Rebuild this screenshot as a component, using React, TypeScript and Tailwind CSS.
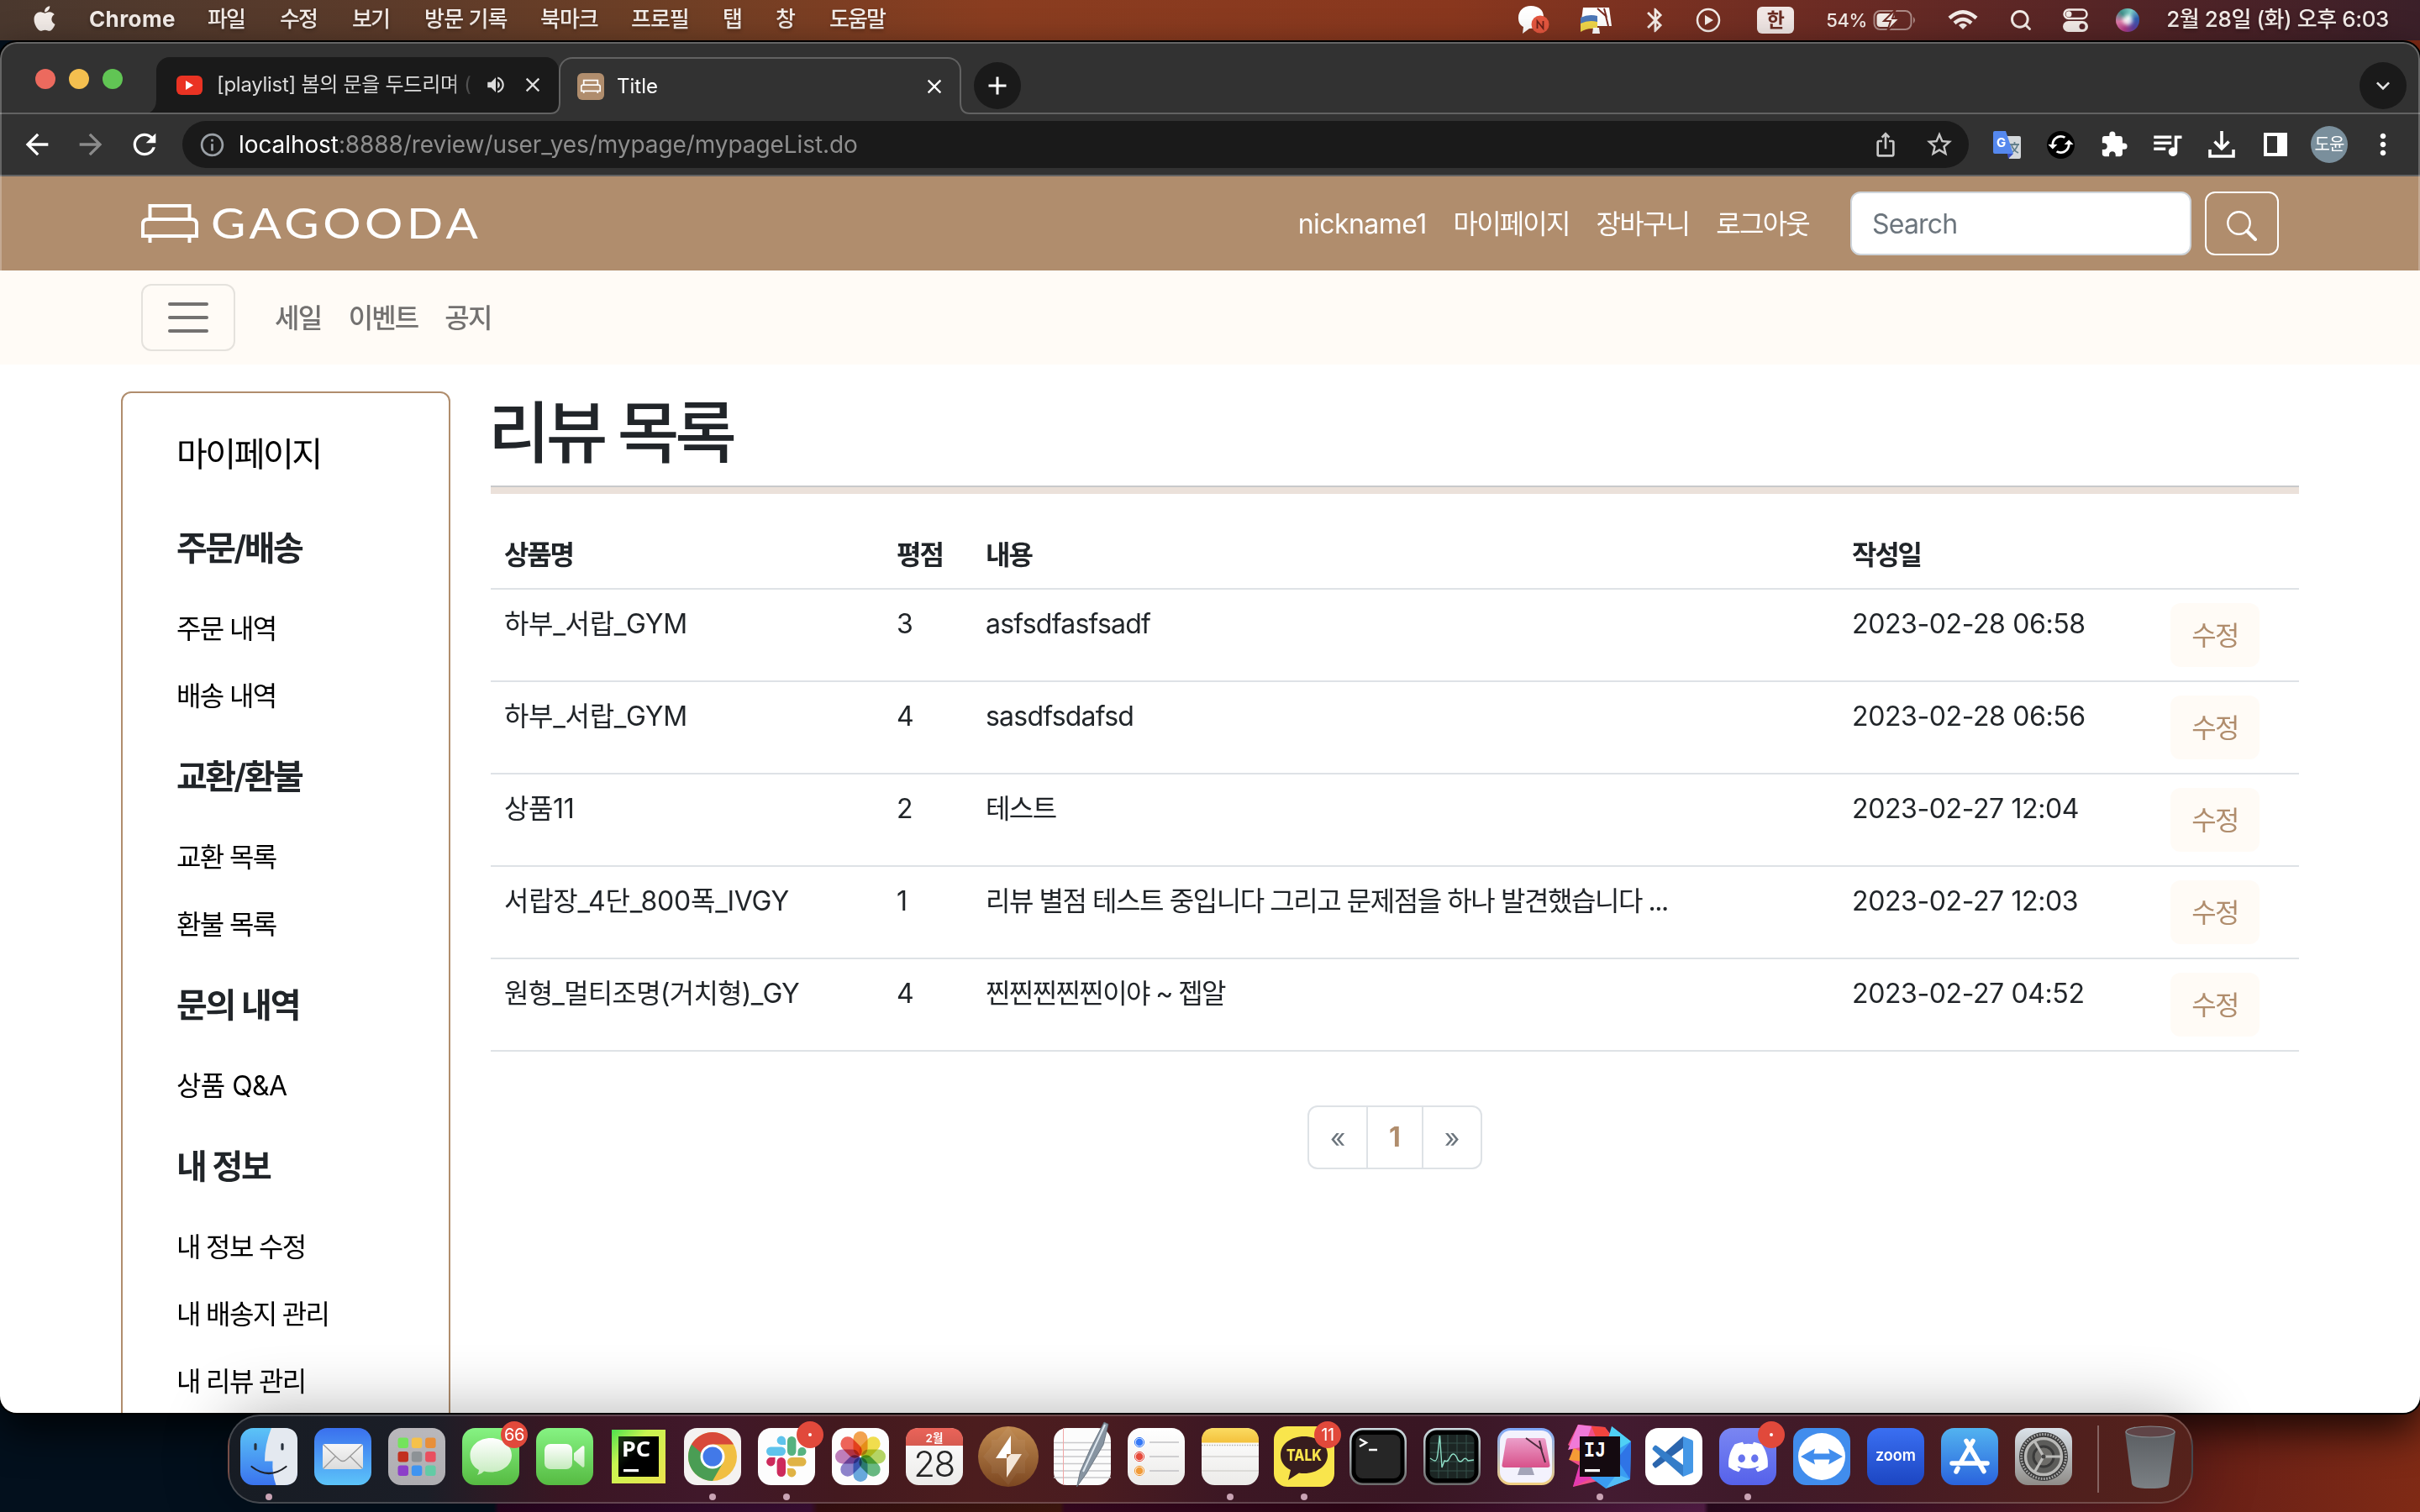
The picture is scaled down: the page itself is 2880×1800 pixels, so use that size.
import React from 'react';
import { FaApple, FaDiscord } from 'react-icons/fa';
import {
  MdArrowBack, MdArrowForward, MdRefresh, MdInfoOutline, MdIosShare, MdStarOutline, MdExtension,
  MdQueueMusic, MdMoreVert, MdVolumeUp, MdClose, MdAdd, MdExpandMore, MdBluetooth, MdSync,
} from 'react-icons/md';
import { FiSearch } from 'react-icons/fi';

/* ---------- macOS menu bar ---------- */

const menus: [string, string][] = [
  ['파일', 'w-[86px] tracking-[-0.074em]'],
  ['수정', 'w-[86px] tracking-[-0.074em]'],
  ['보기', 'w-[86px] tracking-[-0.074em]'],
  ['방문 기록', 'w-[138px] tracking-[-0.03em]'],
  ['북마크', 'w-[108px] tracking-[-0.04em]'],
  ['프로필', 'w-[109px] tracking-[-0.04em]'],
  ['탭', 'w-[63px]'],
  ['창', 'w-[64px]'],
  ['도움말', 'w-[80px] tracking-[-0.074em]'],
];

function MenuBar() {
  return (
    <div className="flex h-[48px] shrink-0 items-center justify-between bg-[linear-gradient(90deg,#4a382e_0%,#5c3b2a_16%,#6f3f25_28%,#8a3d20_41%,#89371e_60%,#6b2b24_76%,#4b2227_92%,#3b2029_100%)] pr-[37px] pl-[38px] text-[26px] font-medium text-[#f3ece8]">
      <div className="flex items-center [text-shadow:0_2px_4px_rgba(0,0,0,.35)]">
        <FaApple className="mr-[38px] -mt-[4px] h-[34px] w-[30px]" />
        <div className="flex pb-[3px]">
          <span className="w-[141px] font-bold tracking-[0.015em]">Chrome</span>
          {menus.map(([t, c]) => (
            <span key={t} className={c}>{t}</span>
          ))}
        </div>
      </div>
      <div className="flex items-center">
        <svg className="mr-[35px] h-[36px] w-[38px]" viewBox="0 0 38 36">
          <path d="M16 1C7 1 1 7 1 15c0 6 2 9 6 11l-1 8 8-6c10 0 17-5 17-14C31 6 25 1 16 1z" fill="#fff" />
          <circle cx="27" cy="23" r="10.5" fill="#e5573f" />
          <path d="M23.500 28v-9l7 9v-9" stroke="#6e2117" strokeWidth="1.800" fill="none" />
        </svg>
        <svg className="mr-[34px] h-[34px] w-[40px]" viewBox="0 0 40 34">
          <path d="M5 2h31l3 22H2z" fill="#fff" />
          <path d="M22 3l10 9 3 12M30 3l3 11" stroke="#7b2c22" strokeWidth="2" fill="none" />
          <path d="M2 14q10-5 20-2v10q-10-3-20 2z" fill="#4d78b8" />
          <path d="M2 21q10-5 20-2v9q-10-3-20 3z" fill="#f0d64a" />
          <path d="M17 26h7l1 7h-9z" fill="#fff" />
        </svg>
        <MdBluetooth className="mr-[31px] size-[34px]" />
        <svg className="mr-[43px] size-[30px]" viewBox="0 0 30 30">
          <circle cx="15" cy="15" r="13" fill="none" stroke="currentColor" strokeWidth="2.500" />
          <path d="M11 9l10 6-10 6z" fill="currentColor" />
        </svg>
        <span className="mr-[38px] flex h-[32px] w-[44px] items-center justify-center rounded-[6px] bg-[#f1e7e5] text-[23px] font-bold text-[#6a2c22]">한</span>
        <span className="mr-[8px] w-[48px] text-[22px] tracking-[-0.02em]">54%</span>
        <svg className="mr-[37px] h-[26px] w-[52px]" viewBox="0 0 52 26">
          <rect x="1.500" y="2" width="44" height="22" rx="7" fill="none" stroke="currentColor" strokeOpacity=".5" strokeWidth="2" />
          <path d="M48 9q4 4 0 8z" fill="currentColor" fillOpacity=".5" />
          <rect x="4.500" y="5" width="21" height="16" rx="4" fill="currentColor" />
          <path d="M27 0L13 14h8l-4 12 15-15h-9z" fill="currentColor" stroke="#6b2b24" strokeWidth="2" />
        </svg>
        <svg className="mr-[37px] h-[26px] w-[36px]" viewBox="0 0 36 26" fill="none" stroke="currentColor" strokeWidth="4.500">
          <path d="M2 10.500Q18-4 34 10.500M8 16.500Q18 7.500 28 16.500" />
          <path d="M18 24l-5-5q5-4.500 10 0z" fill="currentColor" stroke="none" />
        </svg>
        <FiSearch className="mr-[36px] size-[28px]" strokeWidth={2.5} />
        <svg className="mr-[33px] h-[28px] w-[30px]" viewBox="0 0 30 28">
          <rect x="1.500" y="1.500" width="27" height="10.500" rx="5.250" fill="none" stroke="currentColor" strokeWidth="2.500" />
          <circle cx="7" cy="6.700" r="3.500" fill="currentColor" />
          <rect x="0" y="15" width="30" height="13" rx="6.500" fill="currentColor" />
          <circle cx="23" cy="21.500" r="3.500" fill="#572529" />
        </svg>
        <span className="mr-[32px] size-[28px] rounded-full bg-[conic-gradient(from_200deg,#b23a86,#e07aa8,#3f8f8a,#7fd0c8,#2d5fb0,#5b3fa0,#b23a86)] p-[8px]">
          <span className="block size-[12px] rounded-full bg-white/90 blur-[2px]" />
        </span>
        <span className="pb-[3px] tracking-[-0.016em] [text-shadow:0_2px_4px_rgba(0,0,0,.35)]">2월 28일 (화) 오후 6:03</span>
      </div>
    </div>
  );
}

/* ---------- Browser chrome ---------- */

function SofaIcon({ className, stroke = 4 }: { className: string; stroke?: number }) {
  return (
    <svg className={className} viewBox="0 0 68 46" fill="none" stroke="currentColor" strokeWidth={stroke}>
      <path d="M10.500 17V2h47v15" />
      <path d="M2 38V24q0-6 6-6h52q6 0 6 6v14z" />
      <path d="M10.500 38v8M57.500 38v8" />
    </svg>
  );
}

function TabStrip() {
  return (
    <div className="flex h-[86px] shrink-0 items-end border-b-2 border-[#626262] pr-[16px]">
      <div className="mb-[28px] ml-[42px] flex gap-[16px]">
        <span className="size-[24px] rounded-full bg-[#ec6a5e]" />
        <span className="size-[24px] rounded-full bg-[#f4bf4f]" />
        <span className="size-[24px] rounded-full bg-[#61c554]" />
      </div>
      <div className="relative ml-[40px] flex h-[66px] w-[479px] items-center rounded-t-[16px] bg-[#1a1a1a] pl-[24px] text-[#dcdcdc]">
        <svg className="absolute bottom-0 -left-[8px] h-[16px] w-[8px]" viewBox="0 0 8 16"><path d="M8 0v16H0Q8 12 8 0z" fill="#1a1a1a" /></svg>
        <span className="flex h-[23px] w-[31px] items-center justify-center rounded-[6px] bg-[#ea3323]">
          <svg className="h-[11px] w-[9px]" viewBox="0 0 9 11"><path d="M0 0l9 5.500L0 11z" fill="#fff" /></svg>
        </span>
        <span className="ml-[17px] w-[307px] text-[24px] whitespace-nowrap tracking-[-0.012em] [mask-image:linear-gradient(90deg,#000_90%,transparent)]">
          [playlist] 봄의 문을 두드리며 (
        </span>
        <MdVolumeUp className="ml-[12px] size-[26px]" />
        <MdClose className="ml-[17px] size-[28px]" />
      </div>
      <div className="relative -mb-[2px] flex h-[68px] w-[479px] items-center rounded-t-[16px] border-2 border-b-0 border-[#626262] bg-[#323232] pl-[20px] text-white">
        <svg className="absolute bottom-0 -left-[12px] h-[14px] w-[12px]" viewBox="0 0 12 14"><path d="M12 0v14H0v-1q11 0 11-13z" fill="#323232" /><path d="M0 13q11 0 11-13" fill="none" stroke="#626262" strokeWidth="2" /></svg>
        <svg className="absolute -right-[12px] bottom-0 h-[14px] w-[12px]" viewBox="0 0 12 14"><path d="M0 0v14h12v-1Q1 13 1 0z" fill="#323232" /><path d="M12 13Q1 13 1 0" fill="none" stroke="#626262" strokeWidth="2" /></svg>
        <span className="flex size-[32px] items-center justify-center rounded-[6px] bg-[#b08d6d]">
          <SofaIcon className="h-[18px] w-[24px]" stroke={5} />
        </span>
        <span className="ml-[15px] text-[24px]">Title</span>
        <MdClose className="mr-[16px] ml-auto size-[28px]" />
      </div>
      <span className="mb-[4px] ml-[15px] flex size-[56px] items-center justify-center rounded-full bg-[#1a1a1a] text-white">
        <MdAdd className="size-[36px]" />
      </span>
      <span className="mb-[4px] ml-auto flex size-[56px] items-center justify-center rounded-full bg-[#1a1a1a] text-[#e3e3e3]">
        <MdExpandMore className="size-[32px]" />
      </span>
    </div>
  );
}

function Toolbar() {
  return (
    <div className="flex h-[74px] shrink-0 items-center border-b-2 border-[#626262] text-white">
      <MdArrowBack className="ml-[24px] size-[40px]" />
      <MdArrowForward className="ml-[24px] size-[40px] text-[#8b8b8b]" />
      <MdRefresh className="ml-[24px] size-[40px]" />
      <div className="ml-[25px] flex h-[56px] w-[2126px] items-center rounded-full bg-[#1a1a1a] pr-[17px] pl-[19px]">
        <MdInfoOutline className="size-[33px] text-[#9aa0a6]" />
        <span className="ml-[15px] text-[28px] tracking-[-0.003em] text-[#8e8e8e]">
          <span className="text-white">localhost</span>:8888/review/user_yes/mypage/mypageList.do
        </span>
        <MdIosShare className="ml-auto size-[32px] text-[#c7c7c7]" />
        <MdStarOutline className="ml-[30px] size-[36px] text-[#c7c7c7]" />
      </div>
      <svg className="ml-[29px] size-[33px]" viewBox="0 0 33 33">
        <path d="M12 6h19q2 0 2 2v22q0 3-2 3H19z" fill="#d5d9dc" />
        <path d="M20 16h11M25.500 13v3M29 17q-2 6-8 9M22 17q2 6 8 9" stroke="#64808c" strokeWidth="1.800" fill="none" />
        <path d="M2 0h13l9 27H2q-2 0-2-2V2q0-2 2-2z" fill="#5588ee" />
        <path d="M17 27h7l-6 6z" fill="#3a4fc0" />
        <text x="4" y="19" fill="#fff" fontSize="15" fontWeight="700" fontFamily="Inter">G</text>
      </svg>
      <span className="ml-[31px] flex size-[33px] items-center justify-center rounded-full bg-black">
        <MdSync className="size-[34px] rotate-90" />
      </span>
      <MdExtension className="ml-[30px] size-[34px]" />
      <MdQueueMusic className="ml-[25px] size-[42px]" />
      <svg className="ml-[28px] h-[32px] w-[32px]" viewBox="0 0 32 32" fill="none" stroke="currentColor" strokeWidth="3.600">
        <path d="M16 0v20M7.500 12.500L16 21l8.500-8.500M2 22v8h28v-8" />
      </svg>
      <svg className="ml-[34px] size-[28px]" viewBox="0 0 28 28">
        <path fillRule="evenodd" d="M0 0h28v28H0zM4 4v20h12V4z" fill="currentColor" />
      </svg>
      <span className="ml-[28px] flex size-[44px] items-center justify-center rounded-full bg-[#7a8f9c] text-[20px] tracking-[-0.05em]">도윤</span>
      <MdMoreVert className="ml-[22px] size-[40px]" />
    </div>
  );
}

/* ---------- Site ---------- */

function SiteHeader() {
  return (
    <>
      <header className="flex h-[112px] shrink-0 items-center bg-[#b08d6d] px-[168px] text-[32px] text-white">
        <SofaIcon className="h-[46px] w-[68px]" />
        <span className="ml-[15px] origin-left scale-x-[1.11] pb-[3px] font-['Lato'] text-[51px] leading-none tracking-[0.08em]">GAGOODA</span>
        <nav className="mr-[49px] ml-auto flex items-center gap-[32px] pt-[2px]">
          <span className="tracking-[-0.018em]">nickname1</span>
          <span className="tracking-[-0.058em]">마이페이지</span>
          <span className="tracking-[-0.055em]">장바구니</span>
          <span className="tracking-[-0.055em]">로그아웃</span>
        </nav>
        <div className="flex h-[76px] w-[406px] items-center rounded-[12px] border-2 border-[#ced4da] bg-white px-[24px] pt-[1px] tracking-[-0.025em] text-[#6c757d]">Search</div>
        <button className="ml-[16px] flex h-[76px] w-[88px] items-center justify-center rounded-[12px] border-2 border-white">
          <svg className="mt-[6px] size-[36px]" viewBox="0 0 36 36" fill="none" stroke="currentColor">
            <circle cx="14.500" cy="14.500" r="13.200" strokeWidth="2.400" />
            <path d="M24 24l10 10" strokeWidth="4" strokeLinecap="round" />
          </svg>
        </button>
      </header>
      <nav className="flex h-[112px] shrink-0 items-center gap-[32px] bg-[#fffbf6] px-[168px] text-[32px] font-medium text-[#737170]">
        <button className="mr-[15px] flex h-[80px] w-[112px] flex-col items-center justify-center gap-[12px] rounded-[12px] border-2 border-[#e5e2dd]">
          <span className="h-[4px] w-[48px] rounded-full bg-[#737170]" />
          <span className="h-[4px] w-[48px] rounded-full bg-[#737170]" />
          <span className="h-[4px] w-[48px] rounded-full bg-[#737170]" />
        </button>
        <span className="pt-[2px] tracking-[-0.05em]">세일</span>
        <span className="pt-[2px] tracking-[-0.06em]">이벤트</span>
        <span className="pt-[2px] tracking-[-0.05em]">공지</span>
      </nav>
    </>
  );
}

const groups: { title: string; tracking: string; items: string[] }[] = [
  { title: '주문/배송', tracking: 'tracking-[-0.066em]', items: ['주문 내역', '배송 내역'] },
  { title: '교환/환불', tracking: 'tracking-[-0.066em]', items: ['교환 목록', '환불 목록'] },
  { title: '문의 내역', tracking: 'tracking-[-0.055em]', items: ['상품 Q&A'] },
  { title: '내 정보', tracking: 'tracking-[-0.055em]', items: ['내 정보 수정', '내 배송지 관리', '내 리뷰 관리'] },
];

function Sidebar() {
  return (
    <aside className="h-[1400px] w-[392px] shrink-0 rounded-[12px] border-2 border-[#b08d6d] px-[64px] pt-[17px]">
      <div className="flex h-[112px] items-center text-[40px] tracking-[-0.062em] text-black">마이페이지</div>
      {groups.map((g) => (
        <div key={g.title}>
          <h5 className={'flex h-[112px] items-center text-[40px] font-semibold text-[#212529] ' + g.tracking}>{g.title}</h5>
          {g.items.map((i) => (
            <a key={i} className={'flex h-[80px] items-center text-[32px] text-black ' + (i.includes('Q&A') ? 'tracking-[-0.018em]' : 'tracking-[-0.052em]')}>{i}</a>
          ))}
        </div>
      ))}
    </aside>
  );
}

const rows: [string, string, string, string, string, string][] = [
  ['하부_서랍_GYM', 'tracking-[-0.01em]', '3', 'asfsdfasfsadf', 'tracking-[-0.024em]', '2023-02-28 06:58'],
  ['하부_서랍_GYM', 'tracking-[-0.01em]', '4', 'sasdfsdafsd', 'tracking-[-0.024em]', '2023-02-28 06:56'],
  ['상품11', 'tracking-[-0.012em]', '2', '테스트', 'tracking-[-0.05em]', '2023-02-27 12:04'],
  ['서랍장_4단_800폭_IVGY', 'tracking-[-0.008em]', '1', '리뷰 별점 테스트 중입니다 그리고 문제점을 하나 발견했습니다 ...', 'tracking-[-0.045em]', '2023-02-27 12:03'],
  ['원형_멀티조명(거치형)_GY', 'tracking-[-0.024em]', '4', '찐찐찐찐찐이야 ~ 젭알', 'tracking-[-0.05em]', '2023-02-27 04:52'],
];

const cols = 'grid grid-cols-[467px_106px_1031px_379px_169px] border-b-2 border-[#dee2e6] pt-[16px] [&>*]:pl-[16px] [&>span]:leading-[50px]';

function Reviews() {
  return (
    <main className="w-[2152px] text-[#212529]">
      <h1 className="-ml-[3px] h-[96px] text-[80px] leading-[98px] font-medium tracking-[-0.062em]">리뷰 목록</h1>
      <div className="mt-[16px] mb-[32px] h-[10px] border-t-2 border-[#c8c9cb] bg-[#ebe1da]" />
      <div className="text-[32px]">
        <div className={cols + ' pb-[14px] font-bold'}>
          <span className="tracking-[-0.07em]">상품명</span>
          <span className="tracking-[-0.06em]">평점</span>
          <span className="tracking-[-0.06em]">내용</span>
          <span className="tracking-[-0.07em]">작성일</span>
        </div>
        {rows.map((r) => (
          <div key={r[5]} className={cols + ' pb-[16px]'}>
            <span className={r[1]}>{r[0]}</span>
            <span>{r[2]}</span>
            <span className={r[4]}>{r[3]}</span>
            <span className="tracking-[-0.012em]">{r[5]}</span>
            <div>
              <button className="block h-[76px] w-[106px] rounded-[12px] bg-[#fffbf6] pt-[1px] tracking-[-0.05em] text-[#b08d6d]">수정</button>
            </div>
          </div>
        ))}
      </div>
      <div className="mt-[64px] flex justify-center text-[32px] text-[#6c757d]">
        <span className="flex h-[76px] w-[72px] items-center justify-center rounded-l-[12px] border-2 border-[#dee2e6] pt-[2px]">«</span>
        <span className="flex h-[76px] w-[64px] items-center justify-center border-y-2 border-[#dee2e6] font-bold text-[#b08d6d]">1</span>
        <span className="flex h-[76px] w-[72px] items-center justify-center rounded-r-[12px] border-2 border-[#dee2e6] pt-[2px]">»</span>
      </div>
    </main>
  );
}

/* ---------- Dock ---------- */

function Tile({ fill, children }: { fill: string; children?: React.ReactNode }) {
  return (
    <svg className="size-[68px] overflow-visible" viewBox="0 0 68 68">
      <rect width="68" height="68" rx="15.500" fill={fill} />
      {children}
    </svg>
  );
}

function Gradients() {
  const g = (id: string, a: string, b: string) => (
    <linearGradient id={id} x1="0" y1="0" x2="0" y2="1"><stop stopColor={a} /><stop offset="1" stopColor={b} /></linearGradient>
  );
  return (
    <svg className="absolute size-0">
      <defs>
        {g('gFinder', '#5cc4f7', '#3a73ee')}
        {g('gMail', '#3a70ee', '#5cc4f9')}
        {g('gGrey', '#b9b8bc', '#aeadb1')}
        {g('gGreen', '#86f383', '#56bb42')}
        {g('gWhite', '#ffffff', '#ecebe9')}
        {g('gBubble', '#ffffff', '#c5ebbd')}
        {g('gCal', '#ea6459', '#d65a50')}
        {g('gBolt', '#c08a50', '#7c4721')}
        {g('gNote', '#fbdb62', '#f3c13c')}
        {g('gCmm', '#7ea8fb', '#f2cf80')}
        {g('gPink', '#eb9fca', '#d8518a')}
        {g('gZoom', '#3a6ff2', '#1c46c2')}
        {g('gStore', '#52b3f0', '#2a63dd')}
        {g('gSet', '#dbe3ea', '#8f8c88')}
        {g('gTerm', '#cfdde2', '#6c6c6c')}
        {g('gTrash', '#5b5e62', '#7b8084')}
        {g('gEnv', '#f6f6f6', '#dcdcdc')}
        <linearGradient id="gPC" x1="0" y1="0" x2="1" y2="1"><stop stopColor="#4be04e" /><stop offset=".35" stopColor="#c9f551" /><stop offset="1" stopColor="#ece34e" /></linearGradient>
        <linearGradient id="gPCin" x1="0" y1="0" x2="1" y2="1"><stop stopColor="#1d3a16" /><stop offset=".45" stopColor="#000" /></linearGradient>
      </defs>
    </svg>
  );
}

const pads = ['#74e35c', '#f5c14a', '#e88f39', '#c2301f', '#8d9296', '#e94f5f', '#8c3fc9', '#3f94f0', '#63cba5'];
const petals = ['#f2932f', '#f0d92f', '#a9cf4a', '#4fae6c', '#4f9ad8', '#7a6fc4', '#b568b0', '#ec4a3d'];

const icons: { name: string; dot?: boolean; badge?: string; art: React.ReactNode }[] = [
  { name: 'finder', dot: true, art: (
    <Tile fill="url(#gFinder)">
      <path d="M37 0q-8 20-8 39.500h9.500q-1 15 4 28.500H52.500Q68 68 68 52.500v-37Q68 0 52.500 0z" fill="#e4e9f0" />
      <path d="M18 19.500v5.500M50 19.500v5.500" stroke="#27313d" strokeWidth="3.200" strokeLinecap="round" />
      <path d="M13.500 46q20.500 16 41 0" fill="none" stroke="#1f2229" strokeWidth="2.200" strokeLinecap="round" />
    </Tile>) },
  { name: 'mail', art: (
    <Tile fill="url(#gMail)">
      <rect x="10" y="19" width="48" height="30" rx="3" fill="url(#gEnv)" />
      <path d="M11 20l18 17q5 5 10 0l18-17M11 48l14-14M57 48L43 34" fill="none" stroke="#9a9a9a" strokeWidth="1.300" />
    </Tile>) },
  { name: 'launchpad', art: (
    <Tile fill="url(#gGrey)">
      {pads.map((c, i) => <rect key={c} x={11.500 + (i % 3) * 16.300} y={11.500 + Math.floor(i / 3) * 16.500} width="12.500" height="12.500" rx="3" fill={c} />)}
    </Tile>) },
  { name: 'messages', badge: '66', art: (
    <Tile fill="url(#gGreen)">
      <path d="M34 12C20 12 9.500 21 9.500 32.500c0 8 4 14 10.500 17.500q0 3-2 6 5-1 8-4.500 4 1 8 1C48 52.500 59 44 59 32.500S48 12 34 12z" fill="url(#gBubble)" />
    </Tile>) },
  { name: 'facetime', art: (
    <Tile fill="url(#gGreen)">
      <rect x="10" y="19" width="33" height="30" rx="7" fill="url(#gBubble)" />
      <path d="M45 30l10-8.500q2.500-1 2.500 1.500v22q0 2.500-2.500 1.500L45 38z" fill="url(#gBubble)" />
    </Tile>) },
  { name: 'pycharm', art: (
    <svg className="size-[68px]" viewBox="0 0 68 68">
      <rect x="2" y="2" width="64" height="64" fill="url(#gPC)" />
      <rect x="10" y="10" width="48" height="48" fill="url(#gPCin)" />
      <text x="14" y="34" fill="#fff" fontSize="25" fontWeight="700" fontFamily="Noto Sans" textLength="34" lengthAdjust="spacingAndGlyphs">PC</text>
      <rect x="16" y="49" width="18" height="3.200" fill="#fff" />
    </svg>) },
  { name: 'chrome', dot: true, art: (
    <Tile fill="#f4f2f1">
      <circle cx="34" cy="34" r="29" fill="#f1bf42" />
      <path d="M34 19.500H59A29 29 0 0 0 8.900 19.500L21.500 41z" fill="#d8493a" />
      <path d="M8.900 19.500A29 29 0 0 0 34 63L46.500 41.300H34z" fill="#4a9d54" />
      <circle cx="34" cy="34" r="14.500" fill="#fff" />
      <circle cx="34" cy="34" r="11.500" fill="#4279e8" />
    </Tile>) },
  { name: 'slack', dot: true, badge: '•', art: (
    <Tile fill="#fdfdfd">
      <path d="M33 20H28a5.200 5.200 0 1 1 5-5z" fill="#5fc3ec" /><rect x="10" y="22.600" width="23" height="10.400" rx="5.200" fill="#5fc3ec" />
      <rect x="35" y="10" width="10.400" height="23" rx="5.200" fill="#56b280" /><path d="M47.500 33V28a5 5 0 1 1 5 5z" fill="#56b280" />
      <path d="M20.500 35v5a5.200 5.200 0 1 1-5-5z" fill="#cd2a5b" /><rect x="22.600" y="35" width="10.400" height="23" rx="5.200" fill="#cd2a5b" />
      <rect x="35" y="35" width="22.500" height="10.400" rx="5.200" fill="#e0b345" /><path d="M35 48h5a5.200 5.200 0 1 1-5 5z" fill="#e0b345" />
    </Tile>) },
  { name: 'photos', art: (
    <Tile fill="#fdfdfd">
      {petals.map((c, i) => <rect key={c} x="25.500" y="4" width="17" height="29" rx="8.500" fill={c} fillOpacity=".85" className="mix-blend-multiply" transform={`rotate(${i * 45} 34 34)`} />)}
    </Tile>) },
  { name: 'calendar', art: (
    <Tile fill="url(#gWhite)">
      <path d="M0 21v-5.500Q0 0 15.500 0h37Q68 0 68 15.500V21z" fill="url(#gCal)" />
      <text x="34" y="16.500" textAnchor="middle" fill="#fff" fontSize="13.500" fontWeight="600" fontFamily="Inter, 'Noto Sans CJK KR'">2월</text>
      <text x="33.500" y="57.500" textAnchor="middle" fill="#242424" fontSize="42" fontWeight="300" letterSpacing="-1.500" fontFamily="Inter">28</text>
    </Tile>) },
  { name: 'bolt', art: (
    <svg className="size-[68px] overflow-visible" viewBox="0 0 68 68">
      <circle cx="34" cy="34" r="36" fill="url(#gBolt)" />
      <path d="M14 14h40v40H14zM34-2l25 34-25 36L4 34z" fill="#fff" fillOpacity=".05" />
      <path d="M37 9L19 36h13V31h5z" fill="#fff" /><path d="M32 59l18-28H37L32 36z" fill="#f4e6d8" />
    </svg>) },
  { name: 'textedit', art: (
    <Tile fill="#fcfcfc">
      {[17.500, 26, 34, 42.500, 51, 59].map((y) => <path key={y} d={`M0 ${y}h68`} stroke="#c9c9cb" strokeWidth="1.300" />)}
      <path d="M11.500 0v68" stroke="#f0a6a6" />
      <path d="M60-7l5 2.500L59 20 39 54 27.500 70l4-18L44 24z" fill="#8794a1" stroke="#5b6672" strokeWidth=".8" />
      <path d="M61-4L48 24 35 52" stroke="#dfe8f0" strokeWidth="2" fill="none" />
    </Tile>) },
  { name: 'reminders', art: (
    <Tile fill="url(#gWhite)">
      {['#3478f6', '#e5493a', '#f09a37'].map((c, i) => (
        <g key={c}><circle cx="14" cy={17 + i * 17} r="5" fill={c} stroke="#fff" strokeWidth="1.200" /><circle cx="14" cy={17 + i * 17} r="5.600" fill="none" stroke={c} strokeWidth="1" />
          <path d={`M26 ${17 + i * 17}h35`} stroke="#c2c2c5" strokeWidth="1.600" /></g>))}
    </Tile>) },
  { name: 'notes', dot: true, art: (
    <Tile fill="url(#gWhite)">
      <path d="M0 17.500V15.500Q0 0 15.500 0h37Q68 0 68 15.500v2z" fill="url(#gNote)" />
      <path d="M0 20.500h68" stroke="#b5b3ae" strokeWidth="1.500" strokeDasharray="1.500 1.500" />
      <path d="M0 34h68M0 51h68" stroke="#d5d4d1" strokeWidth="1.500" />
    </Tile>) },
  { name: 'kakaotalk', dot: true, badge: '11', art: (
    <svg className="size-[68px] overflow-visible" viewBox="0 0 68 68">
      <rect x="-2" y="-2" width="72" height="72" rx="16" fill="#f9e54c" />
      <path d="M34 10C18 10 6 19.500 6 32c0 8 4 14 12 18l-3 12 13-8.500q3 .5 6 .5c16 0 28-9.500 28-22S50 10 34 10z" fill="#371d1e" />
      <text x="34" y="39" textAnchor="middle" fill="#f9e54c" fontSize="18.500" fontWeight="800" fontFamily="Inter" textLength="42" lengthAdjust="spacingAndGlyphs">TALK</text>
    </svg>) },
  { name: 'terminal', art: (
    <Tile fill="url(#gTerm)">
      <rect x="2.500" y="2.500" width="63" height="63" rx="13.500" fill="#000" />
      <rect x="7.500" y="8" width="53" height="52" rx="8" fill="#262626" />
      <path d="M12 13l8 4.500-8 4.500M23 26h10" fill="none" stroke="#fff" strokeWidth="2.400" />
    </Tile>) },
  { name: 'activity', art: (
    <Tile fill="url(#gTerm)">
      <rect x="2.500" y="2.500" width="63" height="63" rx="13.500" fill="#000" />
      <rect x="7.500" y="8" width="53" height="52" rx="7" fill="#1c2624" />
      <path d="M18 8v52M29 8v52M40 8v52M51 8v52M8 18h52M8 29h52M8 40h52M8 51h52" stroke="#35504a" strokeWidth="1" />
      <path d="M8 36q4 3 6 3 2 0 3-8l2.500-22L22 47l3-8q4 2 6-3 5-11 10 2 3 4 6 0t6 1l7-1" fill="none" stroke="#8fe0c8" strokeWidth="1.400" />
    </Tile>) },
  { name: 'cleaner', art: (
    <Tile fill="url(#gCmm)">
      <rect x="3" y="3" width="62" height="62" rx="12.500" fill="#f3f2fd" />
      <path d="M13 12h42q2 0 2.500 2l5 30q.5 3-3 3h-51q-3.500 0-3-3l5-30q.5-2 2.500-2z" fill="url(#gPink)" />
      <path d="M27 47h14l3 9H24z" fill="#a3a4b8" />
      <path d="M34 12l18 13 5 16M50 15l3 12" stroke="#4a2a3c" strokeWidth="2" fill="none" />
    </Tile>) },
  { name: 'intellij', dot: true, art: (
    <svg className="size-[68px] overflow-visible" viewBox="0 0 68 68">
      <path d="M8-4l32 3 14 18-18 45L2 70l8-25-12-7 4-14-6-4z" fill="#ef4f88" />
      <path d="M8-4l16 2-8 24-20 4z" fill="#f07ad8" /><path d="M24-2l16 1 12 18-18 6z" fill="#f2453e" />
      <path d="M-3 38l6-14 12 6v10z" fill="#f59b35" /><path d="M2 70l8-28 18 16z" fill="#e33bb0" />
      <path d="M48-2l23 18-1 45-29 11-18-13 29-31z" fill="#3a9df2" />
      <path d="M48-2l23 18-20 12-8-12z" fill="#4fd0f5" /><path d="M41 72l29-11-16-6z" fill="#52bdf6" /><path d="M71 16l-1 45-16-24z" fill="#2f74e6" />
      <rect x="10" y="10" width="48" height="48" fill="#140a10" />
      <text x="15" y="34" fill="#fff" fontSize="26" fontWeight="700" fontFamily="Liberation Mono" textLength="26" lengthAdjust="spacingAndGlyphs">IJ</text>
      <rect x="16" y="49" width="18" height="3.200" fill="#fff" />
    </svg>) },
  { name: 'vscode', dot: false, art: (
    <Tile fill="#ffffff">
      <path d="M45 10v14L13.500 47q-1.500 1-2.500 0l-2-2.500q-1-1.500 0-2.500z" fill="#2b65ad" />
      <path d="M45 58V44L13.500 21q-1.500-1-2.500 0l-2 2.500q-1 1.500 0 2.500z" fill="#347dc9" />
      <path d="M45 10l11 4.500q1 .5 1 2v35q0 1.500-1 2L45 58z" fill="#4497e6" />
    </Tile>) },
  { name: 'discord', dot: true, badge: '•', art: (
    <div className="flex size-[68px] items-center justify-center rounded-[15.5px] bg-linear-to-b from-[#7a86f2] to-[#5661ea] text-white">
      <FaDiscord className="size-[51px]" />
    </div>) },
  { name: 'teamviewer', art: (
    <Tile fill="#418ded">
      <circle cx="34" cy="34" r="28" fill="#fff" />
      <path d="M9 34l17-9.500-1.500 6h19l-1.500-6L59 34l-17 9.500 1.500-6h-19l1.500 6z" fill="#418ded" />
    </Tile>) },
  { name: 'zoom', art: (
    <Tile fill="url(#gZoom)">
      <text x="34" y="39" textAnchor="middle" fill="#fff" fontSize="19" fontWeight="600" fontFamily="Inter" textLength="48" lengthAdjust="spacingAndGlyphs">zoom</text>
    </Tile>) },
  { name: 'appstore', art: (
    <Tile fill="url(#gStore)">
      <g stroke="#fff" strokeWidth="5.500" strokeLinecap="round"><path d="M13 42h42" /><path d="M38 15.500L24 40M30 15.500L51 51.500M20 48l-2 4" /></g>
    </Tile>) },
  { name: 'settings', art: (
    <Tile fill="url(#gSet)">
      <circle cx="34" cy="34" r="29" fill="#3a3a3a" />
      <circle cx="34" cy="34" r="26.500" fill="none" stroke="#a5a5a5" strokeWidth="3" strokeDasharray="1.800 1.500" />
      <circle cx="34" cy="34" r="21.500" fill="#5c5c5a" stroke="#b9b9b7" strokeWidth="3.500" />
      <circle cx="34" cy="34" r="12" fill="#6d6c69" stroke="#3a3a3a" strokeWidth="3" />
      <path d="M34 34h21M34 34L23.500 16M34 34L23.500 52" stroke="#bdbdbb" strokeWidth="3.200" />
      <circle cx="34" cy="34" r="2.500" fill="#444" />
    </Tile>) },
];

function Dock() {
  return (
    <div className="absolute top-[1684px] left-[271px] flex h-[106px] w-[2339px] rounded-[38px] border-2 border-white/20 bg-[linear-gradient(90deg,#171c24_0%,#1b1e27_10%,#2b1b25_13%,#3a1623_17%,#40182a_24%,#43191f_31%,#4c1d1e_38%,#4a1c20_44%,#3c1724_51%,#391623_61%,#431b31_70%,#3f1a2a_77%,#451b25_84%,#4e1f1e_92%,#55221b_100%)] pt-[14px] pl-[13px] shadow-[0_0_80px_rgba(0,0,0,.32)]">
      <Gradients />
      <div className="flex gap-[20px]">
        {icons.map((i) => (
          <div key={i.name} className="relative flex h-[86px] w-[68px] flex-col items-center justify-between">
            {i.art}
            {i.dot && <span className="size-[8px] rounded-full bg-[#c9a3b4]" />}
            {i.badge && (
              <span className="absolute -top-[8px] -right-[10px] flex size-[32px] items-center justify-center rounded-full bg-[#e1493b] text-[20px] leading-none tracking-[-0.02em] text-white">
                {i.badge === '•' ? <span className="size-[4px] rounded-full bg-white" /> : i.badge}
              </span>
            )}
          </div>
        ))}
      </div>
      <div className="-mt-[3px] ml-[30px] h-[80px] w-[2px] bg-white/30" />
      <svg className="-mt-[3px] ml-[31px] h-[76px] w-[60px]" viewBox="0 0 60 76">
        <path d="M0 7l8 62q1 6 22 6t22-6l8-62z" fill="url(#gTrash)" />
        <ellipse cx="30" cy="7.500" rx="29" ry="6.500" fill="#5f4447" stroke="#84888c" strokeWidth="1.200" />
      </svg>
    </div>
  );
}

export default function App() {
  return (
    <div className="relative flex h-[1800px] w-[2880px] flex-col overflow-hidden bg-[linear-gradient(90deg,#03101d_0%,#03101d_20.4%,#2a0420_20.6%,#3f1038_33.5%,#3a1012_33.8%,#451910_43.8%,#3a0822_44%,#320618_56%,#5a1f4c_70.4%,#2c0a20_70.6%,#3d0d2d_76%,#541a25_84%,#6b2117_92%,#7f2a15_100%)] font-['Inter','Noto_Sans_CJK_KR',sans-serif]">
      <MenuBar />
      <div className="relative mt-[2px] flex h-[1632px] shrink-0 flex-col overflow-hidden rounded-[20px] bg-[#323232] shadow-[0_0_0_2px_#000,0_20px_50px_rgba(0,0,0,.8)]">
        <TabStrip />
        <Toolbar />
        <SiteHeader />
        <div className="flex flex-1 gap-[48px] overflow-hidden bg-white pt-[32px] pl-[144px]">
          <Sidebar />
          <Reviews />
        </div>
        <div className="pointer-events-none absolute inset-x-0 top-0 h-[272px] rounded-t-[20px] border-2 border-b-0 border-white/25" />
      </div>
      <Dock />
    </div>
  );
}
